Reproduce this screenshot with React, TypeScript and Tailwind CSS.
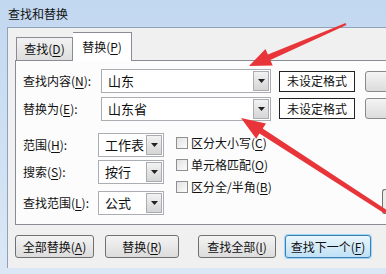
import React from 'react';

const font = { fontFamily: '"Noto Sans CJK SC", "Noto Sans", sans-serif' };

function U({ c }: { c: string }) {
  return <span className="underline underline-offset-2">{c}</span>;
}

function Arrow() {
  return (
    <svg width="11" height="6" viewBox="0 0 11 6">
      <path d="M2 1 L9 1 L5.5 5 Z" fill="#222" />
    </svg>
  );
}

function Combo({ value, width }: { value: string; width: string }) {
  return (
    <div className={`flex h-[24px] shrink-0 ${width} items-stretch border border-[#abadb3] bg-white`}>
      <div className="flex flex-1 items-center pl-[6px] text-[13px] text-[#111]">{value}</div>
      <div className="m-[1px] flex w-[16px] items-center justify-center border border-[#a9acb0] bg-gradient-to-b from-[#f2f2f2] to-[#d5d5d5]">
        <Arrow />
      </div>
    </div>
  );
}

function Check({ children }: { children: React.ReactNode }) {
  return (
    <div className="flex h-[22px] items-center gap-[3px]">
      <div className="h-[12px] w-[12px] border border-[#8f8f8f] bg-gradient-to-br from-[#e2e2e2] to-[#fbfbfb]" />
      <span className="text-[12px] text-[#111]">{children}</span>
    </div>
  );
}

function Btn({ children, w, focus }: { children: React.ReactNode; w: string; focus?: boolean }) {
  return (
    <div
      className={`flex h-[23px] shrink-0 ${w} items-center justify-center rounded-[3px] border text-[12px] text-[#111] ${
        focus
          ? 'border-[#3c7fb1] bg-gradient-to-b from-[#e9f5fc] to-[#bfe1f6] shadow-[0_0_0_1px_#9fd6f4]'
          : 'border-[#707070] bg-gradient-to-b from-[#f4f4f4] to-[#dcdcdc]'
      }`}
    >
      {children}
    </div>
  );
}

export default function App() {
  return (
    <div className="relative h-[274px] w-[386px] overflow-hidden bg-gradient-to-b from-[#c2d8f0] to-[#dbe7f5]" style={font}>
      {/* Title bar */}
      <div className="flex h-[27px] items-center pl-[8px] text-[12px] text-[#111]">查找和替换</div>

      {/* Dialog body */}
      <div className="ml-[7px] flex h-[241px] flex-col border-l border-t border-[#8da2bb] bg-[#f0f0f0]">
        {/* Tabs */}
        <div className="flex h-[32px] shrink-0 items-end pl-[8px]">
          <div className="flex h-[23px] w-[57px] items-center justify-center border border-b-0 border-[#898c95] bg-gradient-to-b from-[#f2f2f2] to-[#dedede] text-[12px] text-[#111]">
            查找(<U c="D" />)
          </div>
          <div className="relative z-10 -mb-[1px] flex h-[29px] w-[59px] items-center justify-center border border-b-0 border-l-0 border-[#898c95] bg-white text-[12px] text-[#111]">
            替换(<U c="P" />)
          </div>
        </div>

        {/* Panel */}
        <div className="ml-[7px] flex h-[165px] shrink-0 flex-col border border-r-0 border-[#898c95] bg-[#fcfcfc] pl-[7px] pt-[8px]">
          <div className="flex h-[24px] items-center">
            <div className="w-[78px] shrink-0 text-[12px] text-[#111]">查找内容(<U c="N" />):</div>
            <Combo value="山东" width="w-[170px]" />
            <div className="ml-[8px] flex h-[21px] w-[76px] shrink-0 items-center justify-center border border-[#222] bg-white text-[12px] text-[#111]">未设定格式</div>
            <div className="ml-[10px] h-[21px] w-[40px] shrink-0 rounded-[3px] border border-[#8a8a8a] bg-gradient-to-b from-[#f4f4f4] to-[#dcdcdc]" />
          </div>
          <div className="mt-[3px] flex h-[25px] items-center">
            <div className="w-[78px] shrink-0 text-[12px] text-[#111]">替换为(<U c="E" />):</div>
            <Combo value="山东省" width="w-[170px]" />
            <div className="ml-[8px] flex h-[21px] w-[76px] shrink-0 items-center justify-center border border-[#222] bg-white text-[12px] text-[#111]">未设定格式</div>
            <div className="ml-[10px] h-[21px] w-[40px] shrink-0 rounded-[3px] border border-[#8a8a8a] bg-gradient-to-b from-[#f4f4f4] to-[#dcdcdc]" />
          </div>

          <div className="mt-[12px] flex">
            <div className="flex flex-col">
              <div className="flex h-[24px] items-center">
                <div className="w-[75px] shrink-0 text-[12px] text-[#111]">范围(<U c="H" />):</div>
                <Combo value="工作表" width="w-[66px]" />
              </div>
              <div className="mt-[3px] flex h-[24px] items-center">
                <div className="w-[75px] shrink-0 text-[12px] text-[#111]">搜索(<U c="S" />):</div>
                <Combo value="按行" width="w-[66px]" />
              </div>
              <div className="mt-[7px] flex h-[24px] items-center">
                <div className="w-[75px] shrink-0 text-[12px] text-[#111]">查找范围(<U c="L" />):</div>
                <Combo value="公式" width="w-[66px]" />
              </div>
            </div>
            <div className="ml-[12px] mt-[-1px] flex flex-col">
              <Check>区分大小写(<U c="C" />)</Check>
              <Check>单元格匹配(<U c="O" />)</Check>
              <Check>区分全/半角(<U c="B" />)</Check>
            </div>
            <div className="ml-auto mt-[56px] h-[25px] w-[4px] rounded-l-[3px] border border-r-0 border-[#707070] bg-[#ececec]" />
          </div>
        </div>

        {/* Bottom buttons */}
        <div className="mt-[10px] flex items-center pl-[7px]">
          <Btn w="w-[79px]">全部替换(<U c="A" />)</Btn>
          <div className="ml-[11px]">
            <Btn w="w-[74px]">替换(<U c="R" />)</Btn>
          </div>
          <div className="ml-[19px]">
            <Btn w="w-[78px]">查找全部(<U c="I" />)</Btn>
          </div>
          <div className="ml-[9px]">
            <Btn w="w-[86px]" focus>查找下一个(<U c="F" />)</Btn>
          </div>
        </div>
      </div>

      {/* Red annotation arrows */}
      <svg className="pointer-events-none absolute left-0 top-0" width="386" height="274" viewBox="0 0 386 274">
        <path d="M345.6 23.1 L267.9 54.6 L265.5 49.1 L249 66 L272.7 65.5 L270.3 60 L346.4 24.9 Z" fill="#e8353a" />
        <path d="M387.1 210.3 L262.7 128.6 L266 123.5 L241 118 L256.2 138.7 L259.5 133.6 L384.9 213.7 Z" fill="#e8353a" />
      </svg>
    </div>
  );
}
